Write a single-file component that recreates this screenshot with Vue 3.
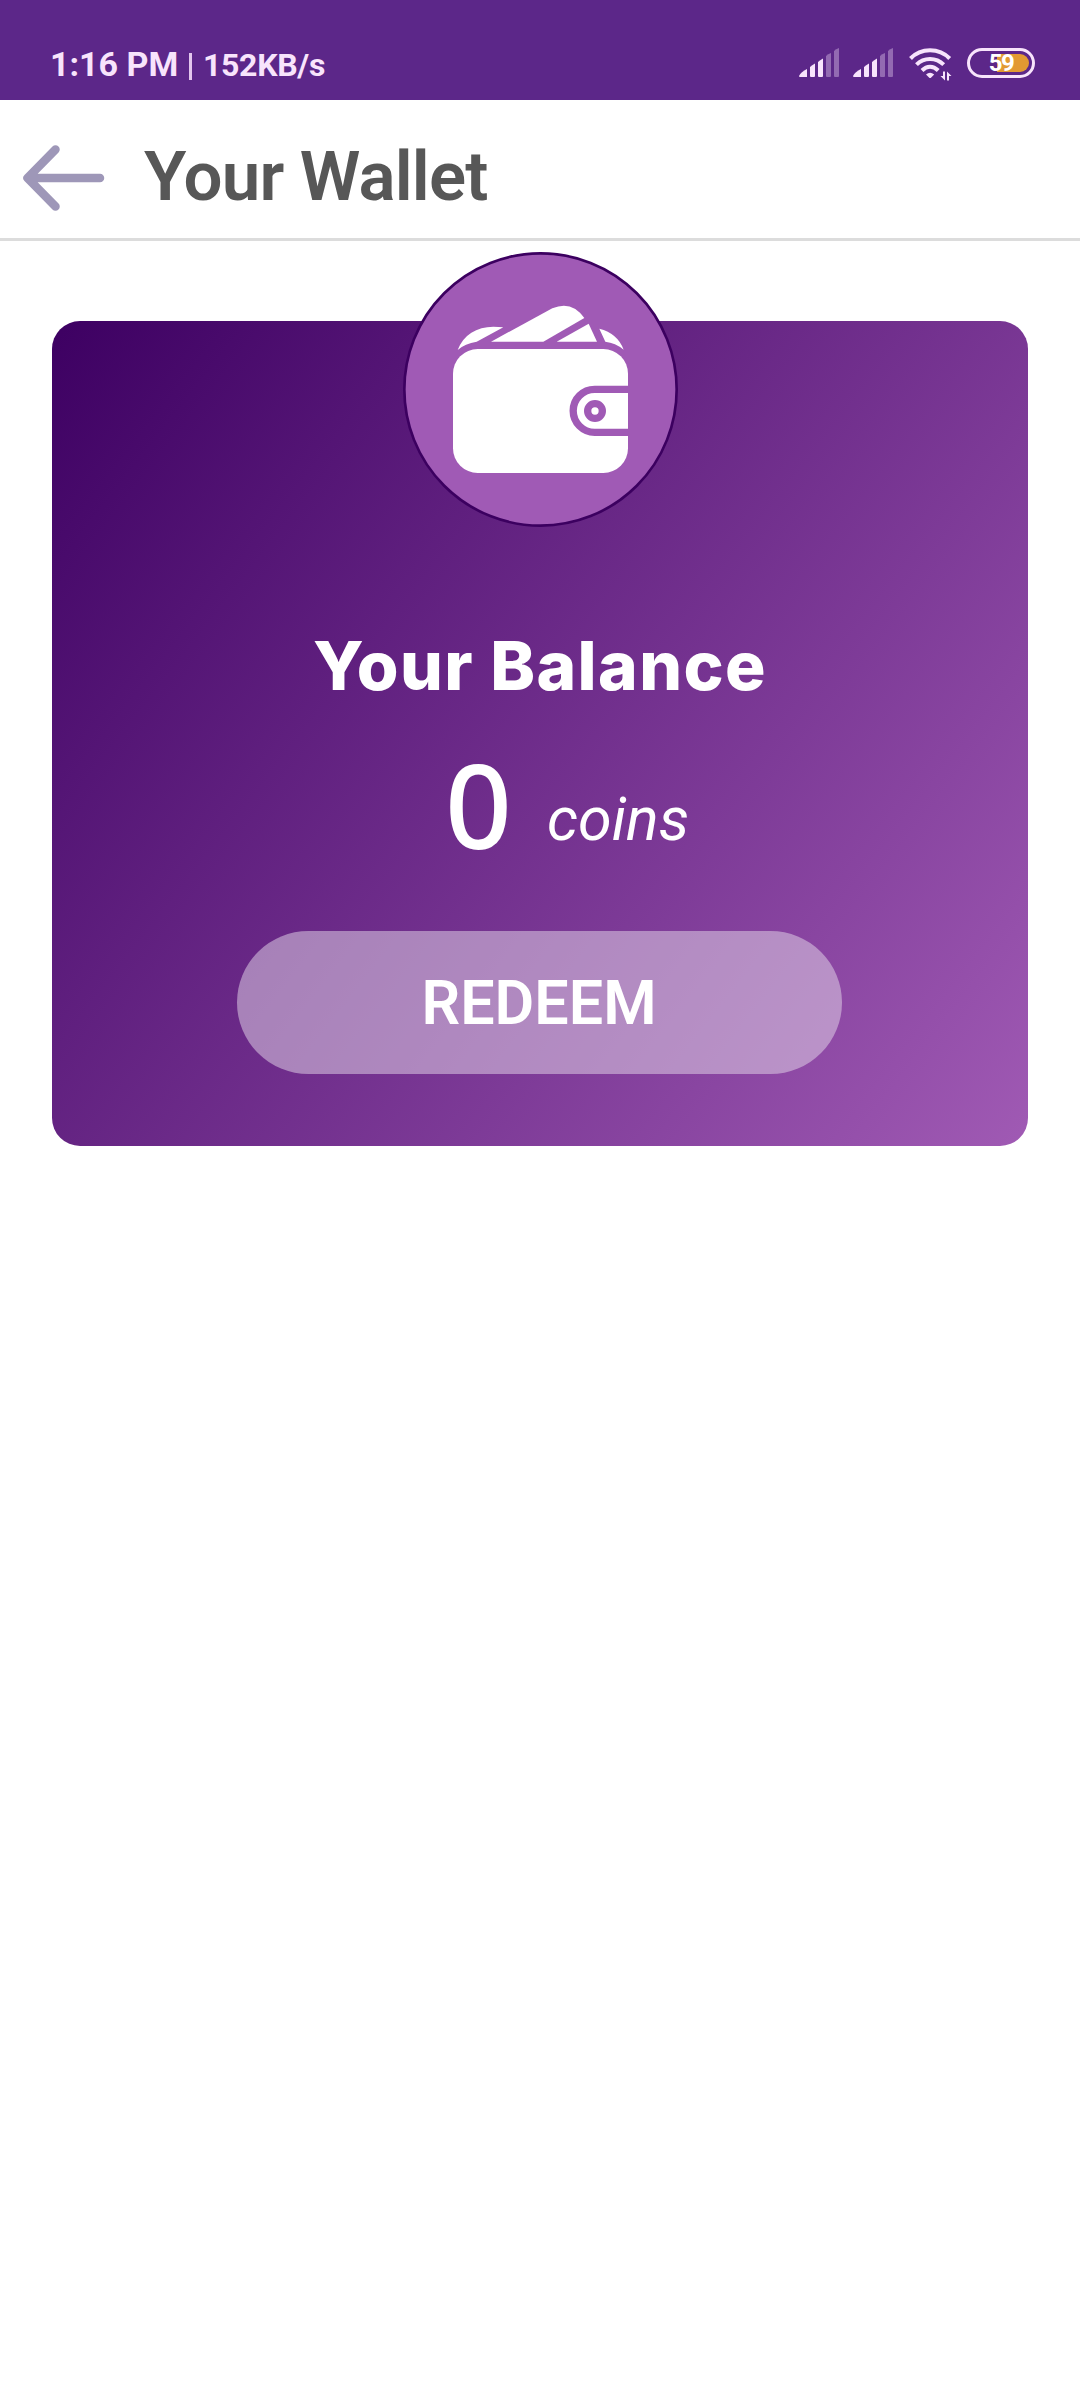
<script setup>
const bars = [
  { d: 'M0 28 Q2 24 8 21 V29 H1 Q0 29 0 28Z', on: true },
  { d: 'M11 19 Q13 17 16 15.5 V28 Q16 29 15 29 H12 Q11 29 11 28Z', on: true },
  { d: 'M19 14 Q21 12 24 10.5 V28 Q24 29 23 29 H20 Q19 29 19 28Z', on: true },
  { d: 'M27 8 Q29 6 32 5 V28 Q32 29 31 29 H28 Q27 29 27 28Z', on: false },
  { d: 'M35 3 Q37 1 40 0 V28 Q40 29 39 29 H36 Q35 29 35 28Z', on: false },
]
</script>

<template>
  <div class="screen">
    <div class="status">
      <span class="time">1:16 PM</span>
      <span class="sep"></span>
      <span class="speed">152KB/s</span>
      <div class="icons">
        <svg v-for="n in 2" :key="n" class="signal" viewBox="0 0 40 29">
          <path v-for="(b, i) in bars" :key="i" :d="b.d" fill="#f8e4fc" :opacity="b.on ? 1 : 0.36" />
        </svg>
        <svg class="wifi" viewBox="0 0 43 33">
          <g fill="none" stroke="#f8e4fc" stroke-width="4">
            <path d="M1.5 10.5 C12 -.5 30 -.5 40.700 10.500" />
            <path d="M7.500 16.600 C15 9 27 9 34.700 16.600" />
            <path d="M13 22.500 C18 17.500 24 17.500 29.200 22.500" />
          </g>
          <path d="M17 26.500 Q21 23 25.200 26.500 L22.200 29.500 Q21 30.500 20 29.500Z" fill="#f8e4fc" />
          <path d="M36 23.500 V32.500 L31.500 28 H34 V23.500Z M38 32.500 V23.500 L42.500 28 H40 V32.500Z" fill="#f8e4fc" />
        </svg>
        <div class="battery">
          <span class="charge"></span>
          <span class="pct">59</span>
        </div>
      </div>
    </div>

    <header class="header">
      <svg class="back" viewBox="0 0 82 66">
        <path d="M32.500 4.500 L4.500 33 L32.500 61.500 M5 33 H77" fill="none" stroke="#9e97b8" stroke-width="8.500" stroke-linecap="round" stroke-linejoin="round" />
      </svg>
      <h1 class="title">Your Wallet</h1>
    </header>

    <main class="card">
      <svg class="badge" viewBox="39 36 825 825">
        <circle cx="451.500" cy="448.500" r="408.500" fill="#a05ab5" stroke="#3c0060" stroke-width="8" />
        <g fill="#fff">
          <path d="M203 330 C220 285 260 260 310 260 L340 262 L260 305 Q225 310 203 330Z" />
          <path d="M303 305 L487 205 Q545 180 583 234 L460 305Z" />
          <path d="M500 305 L596 251 L621 305Z" />
          <path d="M628 266 Q683 280 701 329 Q676 308 646 305Z" />
          <rect x="189" y="327" width="525" height="372" rx="74" />
        </g>
        <path d="M714 448 H614 A64.500 64.500 0 0 0 614 577 H714" fill="none" stroke="#a05ab5" stroke-width="22" />
        <circle cx="615" cy="513" r="22" fill="none" stroke="#a05ab5" stroke-width="22" />
      </svg>
      <h2 class="label">Your Balance</h2>
      <div class="amount">
        <span class="zero">0</span>
        <span class="coins">coins</span>
      </div>
      <button class="redeem"><span>REDEEM</span></button>
    </main>
  </div>
</template>

<style>
body { margin: 0; background: #fff; }
</style>

<style scoped>
.screen { width: 1080px; height: 2400px; background: #fff; font-family: Roboto, sans-serif; }
.status {
  box-sizing: border-box; height: 100px; padding: 44px 45px 0 50px;
  display: flex; align-items: flex-start; background: #5c2789; color: #f8e4fc;
}
.time { width: 139px; font-size: 34px; font-weight: 700; line-height: 40px; white-space: nowrap; }
.sep { width: 3px; height: 27px; margin-top: 9px; background: #e3c6ee; }
.speed { margin-left: 11px; font-size: 32px; font-weight: 700; line-height: 42px; letter-spacing: -.3px; white-space: nowrap; }
.icons { display: flex; margin: 4px 0 0 auto; align-items: flex-start; }
.signal { width: 40px; height: 29px; margin-right: 14px; }
.wifi { width: 43px; height: 33px; margin: 0 15px 0 2px; }
.battery {
  position: relative; box-sizing: border-box; width: 68px; height: 30px;
  border: 3px solid #f8e4fc; border-radius: 15px; display: flex; align-items: center; justify-content: center;
}
.charge { position: absolute; left: 27px; top: 3px; width: 32px; height: 18px; border-radius: 0 9px 9px 0; background: #e29a32; }
.pct { position: relative; font-size: 24px; font-weight: 700; line-height: 24px; color: #fff; letter-spacing: -1.500px; }

.header {
  box-sizing: border-box; height: 141px; padding: 17px 0 0 23px; display: flex; align-items: center;
  border-bottom: 3px solid #dcdcdc;
}
.back { width: 82px; height: 66px; }
.title {
  margin: -1px 0 0 39px; font-size: 69px; line-height: 80px; font-weight: 600; color: #575757;
  white-space: nowrap; letter-spacing: -.8px;
}

.card {
  box-sizing: border-box; width: 976px; height: 825px; margin: 80px 0 0 52px; border-radius: 28px;
  background: linear-gradient(128deg, #3d0062, #a05ab4);
  display: flex; flex-direction: column; align-items: center; color: #fff;
}
.badge { width: 275px; height: 275px; margin-top: -69px; flex: none; }
.label { margin: 98px 0 0; font-family: Inter, sans-serif; font-size: 67.500px; font-weight: 800; line-height: 82px; letter-spacing: 1.400px; white-space: nowrap; }
.amount { width: 976px; height: 120px; margin-top: 37px; display: flex; align-items: baseline; }
.zero { width: 102px; margin-left: 393px; font-family: "Noto Sans", sans-serif; font-size: 117px; font-weight: 500; line-height: 120px; }
.coins { font-size: 61px; font-style: italic; position: relative; top: -9px; }
.redeem {
  width: 605px; height: 143px; margin: 67px 2px 0 0; padding: 0; border: 0; border-radius: 72px;
  background: rgba(226, 212, 232, .52); color: #fff; font: 600 61px/145px Roboto, sans-serif;
}
.redeem span { display: inline-block; }
</style>
